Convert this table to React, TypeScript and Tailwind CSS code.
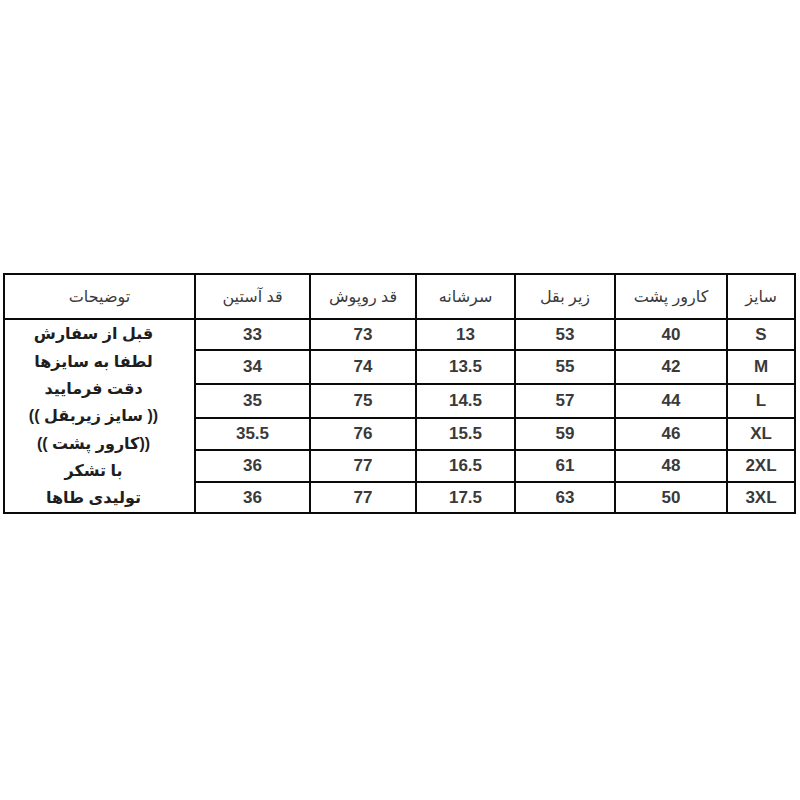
import React from "react";

const headers = ["سایز", "کارور پشت", "زیر بقل", "سرشانه", "قد روپوش", "قد آستین", "توضیحات"];

const rows: string[][] = [
  ["S", "40", "53", "13", "73", "33"],
  ["M", "42", "55", "13.5", "74", "34"],
  ["L", "44", "57", "14.5", "75", "35"],
  ["XL", "46", "59", "15.5", "76", "35.5"],
  ["2XL", "48", "61", "16.5", "77", "36"],
  ["3XL", "50", "63", "17.5", "77", "36"],
];

const desc = [
  "قبل از سفارش",
  "لطفا به سایزها",
  "دقت فرمایید",
  "(( سایز زیربقل ))",
  "((کارور پشت ))",
  "با تشکر",
  "تولیدی طاها",
];

function Header({ text }: { text: string }) {
  return (
    <div className="bg-white flex items-center justify-center text-[16px] text-[#3a3a3a]">
      {text}
    </div>
  );
}

function Cell({ text }: { text: string }) {
  return (
    <div
      dir="ltr"
      className="bg-white flex items-center justify-center text-[17px] font-bold text-[#3a3a3a]"
    >
      {text}
    </div>
  );
}

export default function App() {
  return (
    <div className="w-[800px] h-[800px] bg-white pt-[273px] pl-[3px] font-['Liberation_Sans','DejaVu_Sans',Arial,sans-serif]">
      <div
        dir="rtl"
        className="w-[793px] grid grid-cols-[66px_110px_98px_97px_104px_113px_189px] grid-rows-[43px_29px_32px_32px_30px_30px_29px] gap-[2px] p-[2px] bg-[#0a0a0a]"
      >
        {headers.map((h) => (
          <Header key={h} text={h} />
        ))}
        <div className="bg-white col-start-7 row-start-2 row-span-6 flex flex-col items-center justify-center pr-[12px] text-[16px] font-bold text-[#1e1e1e] leading-[27.3px]">
          {desc.map((d) => (
            <div key={d}>{d}</div>
          ))}
        </div>
        {rows.map((r, ri) => r.map((c, ci) => <Cell key={`${ri}-${ci}`} text={c} />))}
      </div>
    </div>
  );
}
